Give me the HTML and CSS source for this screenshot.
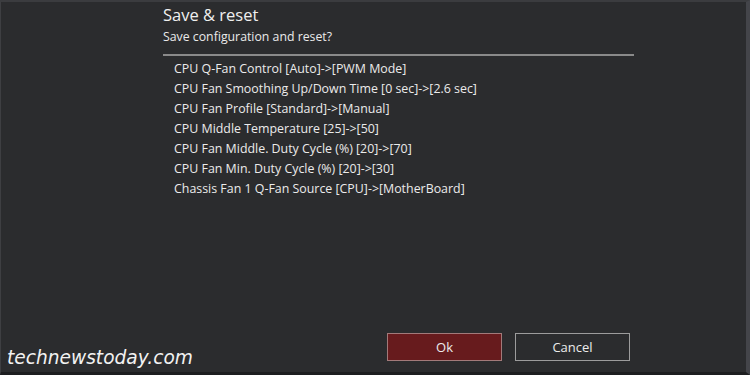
FILE: index.html
```html
<!DOCTYPE html>
<html>
<head>
<meta charset="utf-8">
<link rel="stylesheet" href="styles.css">
</head>
<body>
<div class="screen">
  <div class="dialog">
    <h1 class="title">Save &amp; reset</h1>
    <p class="subtitle">Save configuration and reset?</p>
    <hr class="divider">
    <ul class="changes">
      <li>CPU Q-Fan Control [Auto]-&gt;[PWM Mode]</li>
      <li>CPU Fan Smoothing Up/Down Time [0 sec]-&gt;[2.6 sec]</li>
      <li>CPU Fan Profile [Standard]-&gt;[Manual]</li>
      <li>CPU Middle Temperature [25]-&gt;[50]</li>
      <li>CPU Fan Middle. Duty Cycle (%) [20]-&gt;[70]</li>
      <li>CPU Fan Min. Duty Cycle (%) [20]-&gt;[30]</li>
      <li>Chassis Fan 1 Q-Fan Source [CPU]-&gt;[MotherBoard]</li>
    </ul>
  </div>
  <div class="footer">
    <div class="watermark">technewstoday.com</div>
    <div class="buttons">
      <button class="btn btn-ok">Ok</button>
      <button class="btn btn-cancel">Cancel</button>
    </div>
  </div>
</div>
</body>
</html>
```

FILE: styles.css
```css
* { box-sizing: border-box; }
html, body { margin: 0; padding: 0; background: #2b2c2e; }
.screen {
  width: 750px;
  height: 375px;
  background: #2b2c2e;
  border-top: 2px solid #3b3c3f;
  border-left: 1px solid #3e3f42;
  border-right: 4px solid #44454a;
  border-bottom: 3px solid #1d1e20;
  display: flex;
  flex-direction: column;
  font-family: "Open Sans", "Noto Sans", sans-serif;
  color: #ececec;
  overflow: hidden;
}
.dialog {
  padding-left: 162px;
  width: 633px;
  flex: 1;
}
.title {
  margin: 3px 0 0 0;
  font-size: 16.5px;
  font-weight: 400;
  line-height: 20px;
  color: #f0f0f0;
}
.subtitle {
  margin: 3px 0 0 0;
  font-size: 12.3px;
  line-height: 18px;
  color: #eaeaea;
}
.divider {
  margin: 8px 0 0 0;
  border: 0;
  height: 2px;
  background: #8a8a8a;
}
.changes {
  list-style: none;
  margin: 3px 0 0 0;
  padding: 0 0 0 11px;
}
.changes li {
  font-size: 12.4px;
  line-height: 20px;
  color: #ebebeb;
  white-space: nowrap;
}
.footer {
  display: flex;
  align-items: flex-end;
  height: 60px;
}
.watermark {
  font-family: "DejaVu Sans", sans-serif;
  font-style: italic;
  font-size: 18.6px;
  color: #f2f2f2;
  padding-left: 6px;
  padding-bottom: 4px;
  width: 386px;
}
.buttons {
  display: flex;
  gap: 13px;
  padding-bottom: 11px;
}
.btn {
  width: 115px;
  height: 28px;
  font-family: "Open Sans", "Noto Sans", sans-serif;
  font-size: 13px;
  color: #ececec;
  padding: 0;
}
.btn-ok {
  background: #671b1d;
  border: 1.5px solid #a27a7a;
}
.btn-cancel {
  background: #2b2c2e;
  border: 1.5px solid #9c9c9c;
}
```
